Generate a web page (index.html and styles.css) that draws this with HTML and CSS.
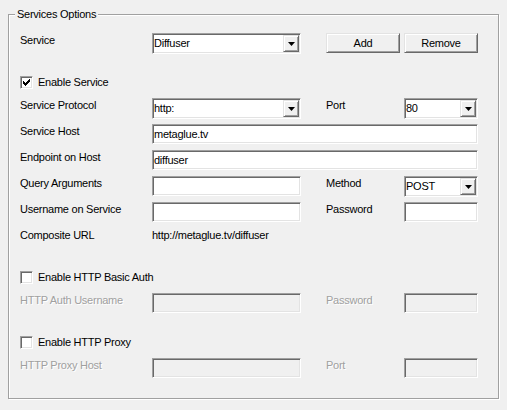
FILE: index.html
```html
<!DOCTYPE html>
<html>
<head>
<meta charset="utf-8">
<link rel="stylesheet" href="styles.css">
</head>
<body>
<div class="group">
  <span class="legend">Services Options</span>

  <div class="row r-service">
    <span class="lbl">Service</span>
    <div class="combo c2"><span class="val">Diffuser</span><span class="drop"><svg width="7" height="4" viewBox="0 0 7 4"><path d="M0 0h7l-3.5 4z" fill="#000"/></svg></span></div>
    <button class="btn c4">Add</button>
    <button class="btn c5">Remove</button>
  </div>

  <div class="check r-enable">
    <span class="box"><svg width="7" height="7" viewBox="0 0 7 7"><path d="M0 2h1v1h1v1h1v-1h1v-1h1v-1h1v-1h1v3h-1v1h-1v1h-1v1h-1v1h-1v-1h-1v-1h-1v-1h-1z" fill="#000"/></svg></span>
    <span>Enable Service</span>
  </div>

  <div class="row r-first">
    <span class="lbl">Service Protocol</span>
    <div class="combo c2"><span class="val">http:</span><span class="drop"><svg width="7" height="4" viewBox="0 0 7 4"><path d="M0 0h7l-3.5 4z" fill="#000"/></svg></span></div>
    <span class="lbl c4">Port</span>
    <div class="combo c5"><span class="val">80</span><span class="drop"><svg width="7" height="4" viewBox="0 0 7 4"><path d="M0 0h7l-3.5 4z" fill="#000"/></svg></span></div>
  </div>

  <div class="row">
    <span class="lbl">Service Host</span>
    <div class="edit span"><span class="val">metaglue.tv</span></div>
  </div>

  <div class="row">
    <span class="lbl">Endpoint on Host</span>
    <div class="edit span"><span class="val">diffuser</span></div>
  </div>

  <div class="row">
    <span class="lbl">Query Arguments</span>
    <div class="edit c2"></div>
    <span class="lbl c4">Method</span>
    <div class="combo c5"><span class="val">POST</span><span class="drop"><svg width="7" height="4" viewBox="0 0 7 4"><path d="M0 0h7l-3.5 4z" fill="#000"/></svg></span></div>
  </div>

  <div class="row">
    <span class="lbl">Username on Service</span>
    <div class="edit c2"></div>
    <span class="lbl c4">Password</span>
    <div class="edit c5"></div>
  </div>

  <div class="row">
    <span class="lbl">Composite URL</span>
    <span class="lbl url">http://metaglue.tv/diffuser</span>
  </div>

  <div class="check r-sec">
    <span class="box"></span>
    <span>Enable HTTP Basic Auth</span>
  </div>

  <div class="row r-dis">
    <span class="lbl dis">HTTP Auth Username</span>
    <div class="edit off c2"></div>
    <span class="lbl dis c4">Password</span>
    <div class="edit off c5"></div>
  </div>

  <div class="check r-sec">
    <span class="box"></span>
    <span>Enable HTTP Proxy</span>
  </div>

  <div class="row r-dis">
    <span class="lbl dis">HTTP Proxy Host</span>
    <div class="edit off c2"></div>
    <span class="lbl dis c4">Port</span>
    <div class="edit off c5"></div>
  </div>
</div>
</body>
</html>
```

FILE: styles.css
```css
* { box-sizing: border-box; }

html, body {
  margin: 0;
  padding: 0;
  background: #f0f0f0;
}

body {
  font-family: "Liberation Sans", Arial, sans-serif;
  font-size: 11px;
  letter-spacing: -0.25px;
  line-height: 13px;
  color: #000;
  width: 507px;
  height: 410px;
  overflow: hidden;
}

.group {
  position: relative;
  margin: 14px 0 0 8px;
  width: 491px;
  height: 385px;
  border: 1px solid #a0a0a0;
  box-shadow: inset 1px 1px 0 #fff, 1px 1px 0 #fff;
  padding: 18px 0 0 11px;
}

.legend {
  position: absolute;
  top: -7px;
  left: 6px;
  padding: 0 2px;
  background: #f0f0f0;
}

.row {
  display: grid;
  grid-template-columns: 132px 149px 25px 78px 74px;
  height: 26px;
  align-items: start;
}

.r-service { height: 21px; }
.r-first { margin-top: 9px; }
.r-dis { margin-top: 9px; }

.lbl { grid-column: 1; white-space: nowrap; padding-top: 1px; }
.c2 { grid-column: 2; }
.c4 { grid-column: 4; }
.c5 { grid-column: 5; }
.span { grid-column: 2 / 6; }
.url { grid-column: 2 / 6; }

.dis {
  color: #a0a0a0;
  text-shadow: 1px 1px 0 #fff;
}

.check {
  display: flex;
  align-items: center;
  gap: 5px;
  height: 13px;
}

.r-enable { margin-top: 22px; }
.r-sec { margin-top: 17px; }

.box {
  width: 13px;
  height: 13px;
  flex: none;
  background: #fff;
  border: 1px solid;
  border-color: #a0a0a0 #fff #fff #a0a0a0;
  box-shadow: inset 1px 1px 0 #696969, inset -1px -1px 0 #e3e3e3;
  padding: 2px 0 0 2px;
  display: flex;
  align-items: flex-start;
}

.box svg { display: block; }

.edit, .combo {
  background: #fff;
  border: 1px solid;
  border-color: #a0a0a0 #fff #fff #a0a0a0;
  box-shadow: inset 1px 1px 0 #696969, inset -1px -1px 0 #e3e3e3;
  display: flex;
  align-items: center;
}

.edit {
  height: 20px;
  padding-left: 1px;
}

.edit.off { background: #f0f0f0; }

.combo {
  height: 21px;
  padding: 1px;
}

.combo .val { flex: 1; }

.drop {
  width: 16px;
  height: 17px;
  flex: none;
  background: #f0f0f0;
  border: 1px solid;
  border-color: #e3e3e3 #696969 #696969 #e3e3e3;
  box-shadow: inset 1px 1px 0 #fff, inset -1px -1px 0 #a0a0a0;
  display: flex;
  align-items: center;
  justify-content: center;
  padding-top: 1px;
}

.drop svg { display: block; }

.btn {
  width: 74px;
  height: 20px;
  margin: 0;
  padding: 0;
  font: inherit;
  letter-spacing: inherit;
  color: #000;
  background: #f0f0f0;
  border: 1px solid;
  border-color: #e3e3e3 #696969 #696969 #e3e3e3;
  box-shadow: inset 1px 1px 0 #fff, inset -1px -1px 0 #a0a0a0;
}
```
